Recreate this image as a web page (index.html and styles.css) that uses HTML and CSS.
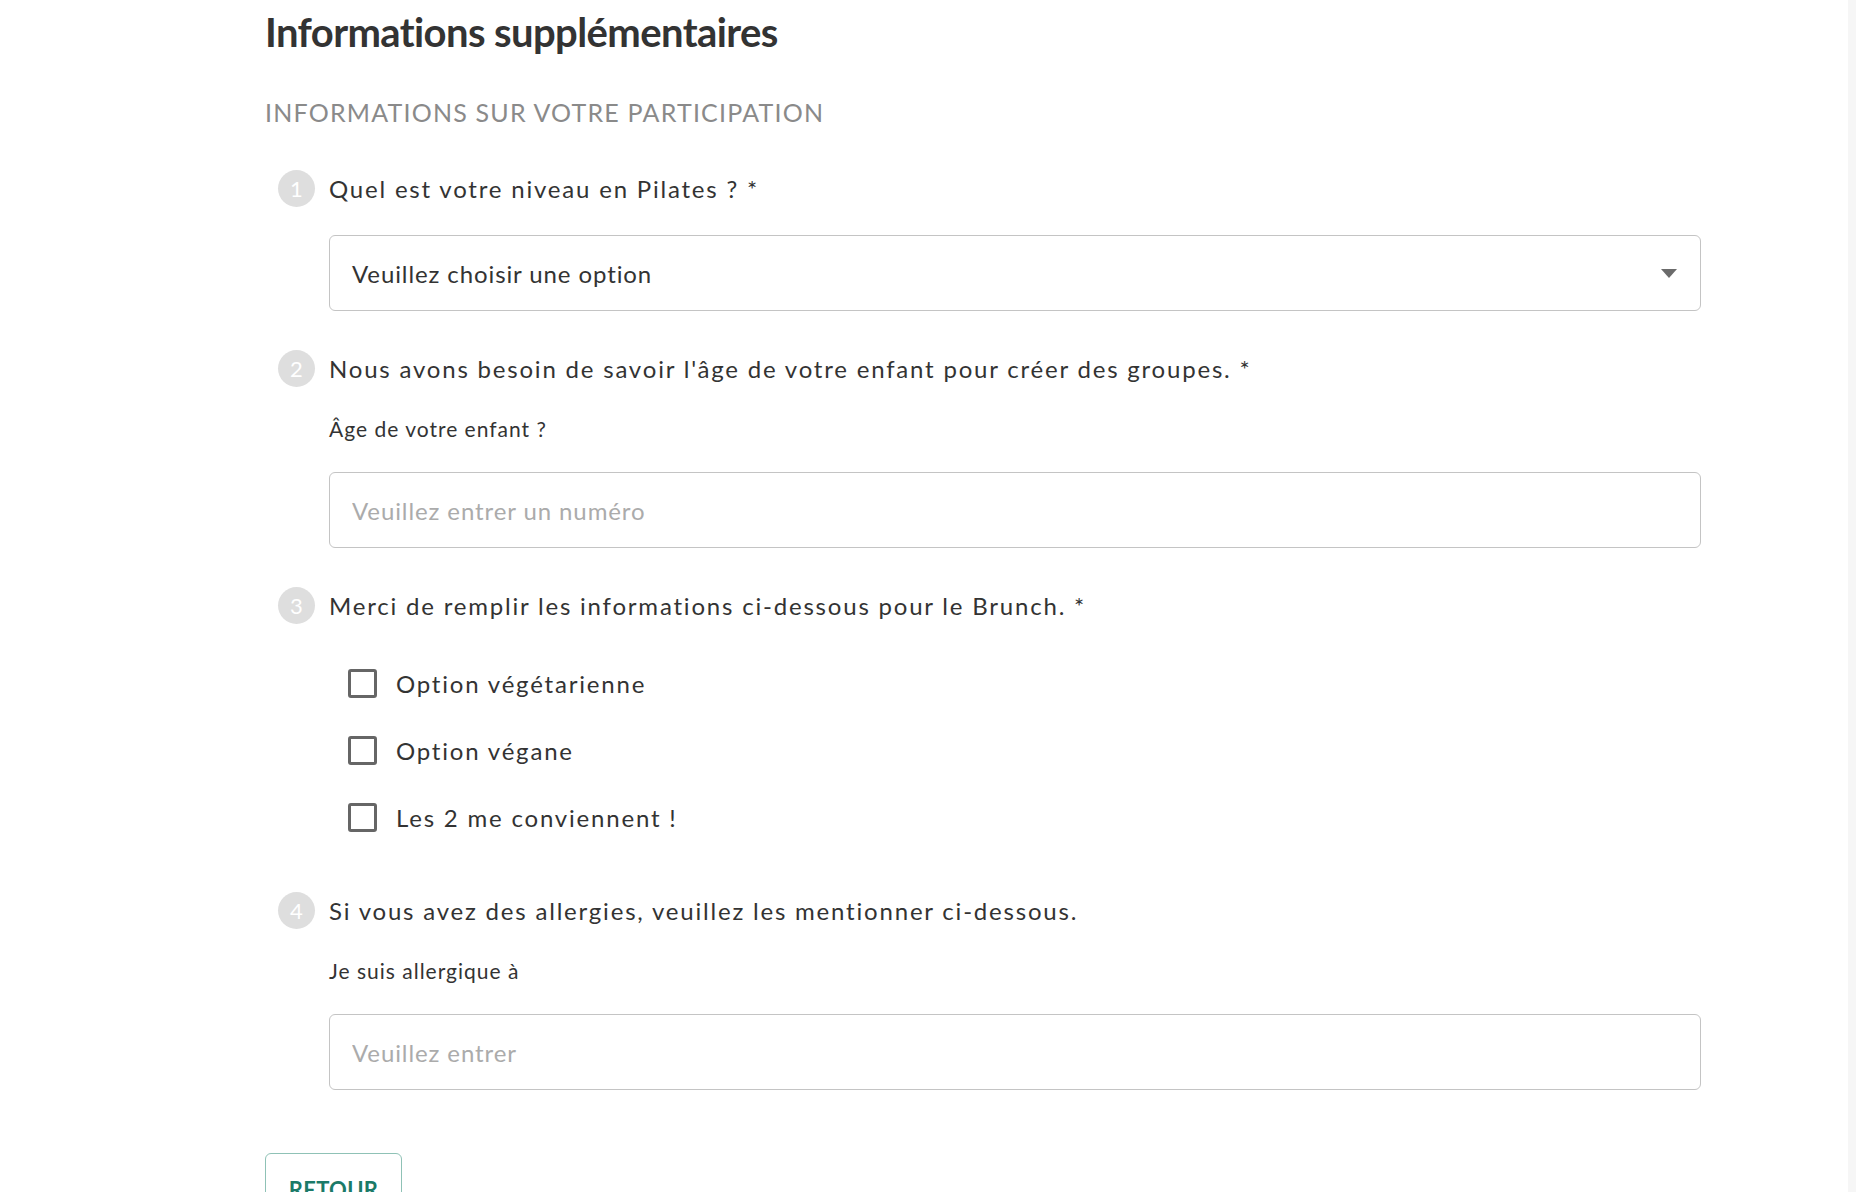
FILE: index.html
```html
<!DOCTYPE html>
<html lang="fr">
<head>
<meta charset="utf-8">
<title>Informations supplémentaires</title>
<link rel="stylesheet" href="styles.css">
</head>
<body>
<div class="page">
  <main class="content">
    <h1 class="title">Informations supplémentaires</h1>
    <h2 class="section">INFORMATIONS SUR VOTRE PARTICIPATION</h2>

    <div class="question">
      <div class="q-head"><span class="num">1</span><span class="q-text">Quel est votre niveau en Pilates ? *</span></div>
      <div class="q-body">
        <div class="select"><span>Veuillez choisir une option</span>
          <svg class="caret" width="16" height="9" viewBox="0 0 16 9"><path d="M0 0H16L8 9Z" fill="#6b6b6b"/></svg>
        </div>
      </div>
    </div>

    <div class="question">
      <div class="q-head"><span class="num">2</span><span class="q-text">Nous avons besoin de savoir l'âge de votre enfant pour créer des groupes. *</span></div>
      <div class="q-body">
        <label class="field-label">Âge de votre enfant ?</label>
        <input class="field" type="text" placeholder="Veuillez entrer un numéro">
      </div>
    </div>

    <div class="question">
      <div class="q-head"><span class="num">3</span><span class="q-text">Merci de remplir les informations ci-dessous pour le Brunch. *</span></div>
      <div class="checks">
        <div class="check"><span class="box"></span><span>Option végétarienne</span></div>
        <div class="check"><span class="box"></span><span>Option végane</span></div>
        <div class="check"><span class="box"></span><span>Les 2 me conviennent !</span></div>
      </div>
    </div>

    <div class="question">
      <div class="q-head"><span class="num">4</span><span class="q-text">Si vous avez des allergies, veuillez les mentionner ci-dessous.</span></div>
      <div class="q-body">
        <label class="field-label">Je suis allergique à</label>
        <input class="field" type="text" placeholder="Veuillez entrer">
      </div>
    </div>

    <div class="actions">
      <button class="btn-back" type="button">RETOUR</button>
    </div>
  </main>
  <div class="rail"></div>
</div>
</body>
</html>
```

FILE: styles.css
```css
* { box-sizing: border-box; }
html, body { margin: 0; padding: 0; background: #fff; }
body {
  font-family: Lato, "Open Sans", Arial, sans-serif;
  color: #333;
  height: 1192px;
  overflow: hidden;
}
.page {
  display: flex;
  height: 1192px;
}
.content {
  flex: 1;
  padding-left: 265px;
  padding-right: 147px;
}
.rail {
  width: 8px;
  background: #f6f6f6;
}
.title {
  margin: 0;
  padding-top: 8px;
  font-size: 40px;
  line-height: 48px;
  font-weight: 700;
  color: #333;
  letter-spacing: -0.6px;
}
.section {
  margin: 41px 0 0;
  font-size: 25px;
  line-height: 30px;
  font-weight: 400;
  color: #8a8a8a;
  letter-spacing: 1.2px;
}
.question {
  margin-top: 39px;
}
.section + .question { margin-top: 43px; }
.q-head {
  display: flex;
  align-items: center;
  gap: 14px;
  padding-left: 13px;
}
.num {
  flex: none;
  width: 37px;
  height: 37px;
  border-radius: 50%;
  background: #dedede;
  color: #fff;
  font-size: 22px;
  display: flex;
  align-items: center;
  justify-content: center;
}
.q-text {
  font-size: 24px;
  letter-spacing: 1.8px;
  color: #333;
}
.q-body {
  margin-left: 64px;
}
.select {
  margin-top: 28px;
  height: 76px;
  border: 1px solid #c4c4c4;
  border-radius: 6px;
  display: flex;
  align-items: center;
  justify-content: space-between;
  padding: 0 23px 0 22px;
  font-size: 24px;
  letter-spacing: 0.9px;
  color: #333;
}
.caret { display: block; }
.field-label {
  display: block;
  margin-top: 30px;
  font-size: 21px;
  line-height: 24px;
  letter-spacing: 1px;
  color: #333;
}
.field {
  display: block;
  width: 100%;
  margin-top: 31px;
  height: 76px;
  border: 1px solid #c4c4c4;
  border-radius: 6px;
  padding: 0 22px;
  font-family: inherit;
  font-size: 24px;
  letter-spacing: 0.9px;
  color: #333;
  background: #fff;
  outline: none;
}
.field::placeholder { color: #ababab; letter-spacing: 0.9px; }
.checks {
  margin-left: 83px;
  margin-top: 45px;
  padding-bottom: 21px;
  display: flex;
  flex-direction: column;
  gap: 38px;
}
.check {
  display: flex;
  align-items: center;
  gap: 19px;
  font-size: 24px;
  letter-spacing: 1.8px;
  color: #333;
  height: 29px;
}
.box {
  flex: none;
  width: 29px;
  height: 29px;
  border: 3px solid #666;
  border-radius: 3px;
}
.actions {
  margin-top: 63px;
}
.btn-back {
  width: 137px;
  height: 80px;
  border: 1px solid #8fc2b6;
  border-radius: 6px;
  background: #fff;
  color: #1b7a68;
  font-family: inherit;
  font-weight: 700;
  font-size: 22px;
  line-height: 26px;
  letter-spacing: 0.3px;
  padding: 23px 0 0;
  display: flex;
  justify-content: center;
  align-items: flex-start;
}
```
